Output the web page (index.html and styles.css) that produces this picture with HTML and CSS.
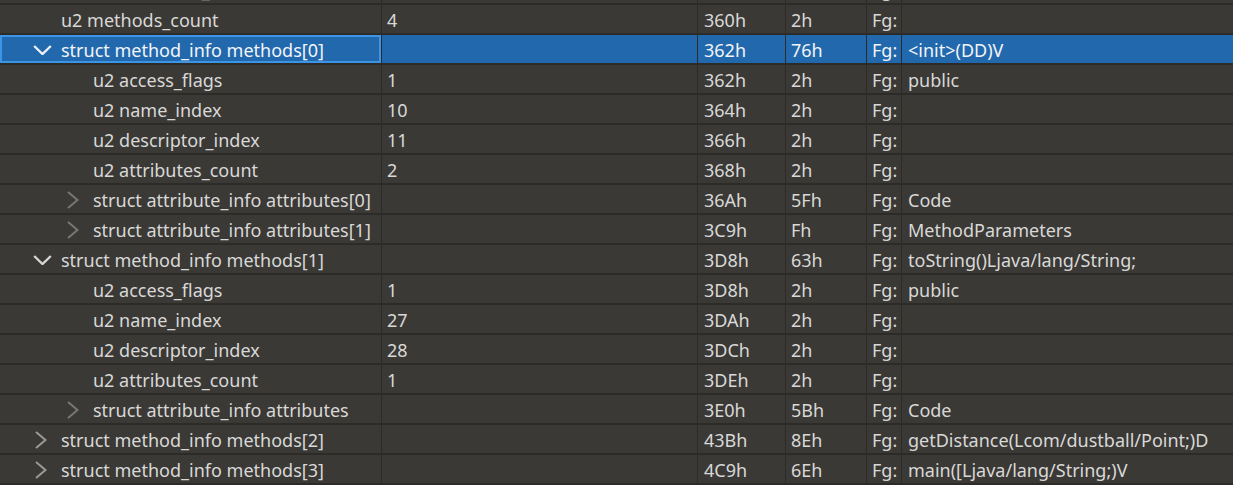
FILE: index.html
```html
<!DOCTYPE html>
<html>
<head>
<meta charset="utf-8">
<link rel="stylesheet" href="styles.css">
</head>
<body>
<div class="table">
  <div class="row">
    <div class="c1 l2"><span class="tw"></span><span class="name">u2 attributes_count</span></div>
    <div class="c2">1</div><div class="c3">35Eh</div><div class="c4">2h</div><div class="c5">Fg:</div><div class="c6"></div>
  </div>
  <div class="row">
    <div class="c1 l1"><span class="tw"></span><span class="name">u2 methods_count</span></div>
    <div class="c2">4</div><div class="c3">360h</div><div class="c4">2h</div><div class="c5">Fg:</div><div class="c6"></div>
  </div>
  <div class="row sel">
    <div class="c1 l1 focus"><span class="tw"><svg class="ico-open" width="19" height="10" viewBox="0 0 19 10"><polyline points="1.2,1 9.5,9 17.8,1"/></svg></span><span class="name">struct method_info methods[0]</span></div>
    <div class="c2"></div><div class="c3">362h</div><div class="c4">76h</div><div class="c5">Fg:</div><div class="c6">&lt;init&gt;(DD)V</div>
  </div>
  <div class="row">
    <div class="c1 l2"><span class="tw"></span><span class="name">u2 access_flags</span></div>
    <div class="c2">1</div><div class="c3">362h</div><div class="c4">2h</div><div class="c5">Fg:</div><div class="c6">public</div>
  </div>
  <div class="row">
    <div class="c1 l2"><span class="tw"></span><span class="name">u2 name_index</span></div>
    <div class="c2">10</div><div class="c3">364h</div><div class="c4">2h</div><div class="c5">Fg:</div><div class="c6"></div>
  </div>
  <div class="row">
    <div class="c1 l2"><span class="tw"></span><span class="name">u2 descriptor_index</span></div>
    <div class="c2">11</div><div class="c3">366h</div><div class="c4">2h</div><div class="c5">Fg:</div><div class="c6"></div>
  </div>
  <div class="row">
    <div class="c1 l2"><span class="tw"></span><span class="name">u2 attributes_count</span></div>
    <div class="c2">2</div><div class="c3">368h</div><div class="c4">2h</div><div class="c5">Fg:</div><div class="c6"></div>
  </div>
  <div class="row">
    <div class="c1 l2"><span class="tw"><svg class="ico-closed dim" width="12" height="18" viewBox="0 0 12 18"><polyline points="1,1 10.5,9 1,17"/></svg></span><span class="name">struct attribute_info attributes[0]</span></div>
    <div class="c2"></div><div class="c3">36Ah</div><div class="c4">5Fh</div><div class="c5">Fg:</div><div class="c6">Code</div>
  </div>
  <div class="row">
    <div class="c1 l2"><span class="tw"><svg class="ico-closed dim" width="12" height="18" viewBox="0 0 12 18"><polyline points="1,1 10.5,9 1,17"/></svg></span><span class="name">struct attribute_info attributes[1]</span></div>
    <div class="c2"></div><div class="c3">3C9h</div><div class="c4">Fh</div><div class="c5">Fg:</div><div class="c6">MethodParameters</div>
  </div>
  <div class="row">
    <div class="c1 l1"><span class="tw"><svg class="ico-open" width="19" height="10" viewBox="0 0 19 10"><polyline points="1.2,1 9.5,9 17.8,1"/></svg></span><span class="name">struct method_info methods[1]</span></div>
    <div class="c2"></div><div class="c3">3D8h</div><div class="c4">63h</div><div class="c5">Fg:</div><div class="c6">toString()Ljava/lang/String;</div>
  </div>
  <div class="row">
    <div class="c1 l2"><span class="tw"></span><span class="name">u2 access_flags</span></div>
    <div class="c2">1</div><div class="c3">3D8h</div><div class="c4">2h</div><div class="c5">Fg:</div><div class="c6">public</div>
  </div>
  <div class="row">
    <div class="c1 l2"><span class="tw"></span><span class="name">u2 name_index</span></div>
    <div class="c2">27</div><div class="c3">3DAh</div><div class="c4">2h</div><div class="c5">Fg:</div><div class="c6"></div>
  </div>
  <div class="row">
    <div class="c1 l2"><span class="tw"></span><span class="name">u2 descriptor_index</span></div>
    <div class="c2">28</div><div class="c3">3DCh</div><div class="c4">2h</div><div class="c5">Fg:</div><div class="c6"></div>
  </div>
  <div class="row">
    <div class="c1 l2"><span class="tw"></span><span class="name">u2 attributes_count</span></div>
    <div class="c2">1</div><div class="c3">3DEh</div><div class="c4">2h</div><div class="c5">Fg:</div><div class="c6"></div>
  </div>
  <div class="row">
    <div class="c1 l2"><span class="tw"><svg class="ico-closed dim" width="12" height="18" viewBox="0 0 12 18"><polyline points="1,1 10.5,9 1,17"/></svg></span><span class="name">struct attribute_info attributes</span></div>
    <div class="c2"></div><div class="c3">3E0h</div><div class="c4">5Bh</div><div class="c5">Fg:</div><div class="c6">Code</div>
  </div>
  <div class="row">
    <div class="c1 l1"><span class="tw"><svg class="ico-closed" width="12" height="18" viewBox="0 0 12 18"><polyline points="1,1 10.5,9 1,17"/></svg></span><span class="name">struct method_info methods[2]</span></div>
    <div class="c2"></div><div class="c3">43Bh</div><div class="c4">8Eh</div><div class="c5">Fg:</div><div class="c6">getDistance(Lcom/dustball/Point;)D</div>
  </div>
  <div class="row">
    <div class="c1 l1"><span class="tw"><svg class="ico-closed" width="12" height="18" viewBox="0 0 12 18"><polyline points="1,1 10.5,9 1,17"/></svg></span><span class="name">struct method_info methods[3]</span></div>
    <div class="c2"></div><div class="c3">4C9h</div><div class="c4">6Eh</div><div class="c5">Fg:</div><div class="c6">main([Ljava/lang/String;)V</div>
  </div>
</div>
</body>
</html>
```

FILE: styles.css
```css
html, body {
  margin: 0;
  padding: 0;
  background: #2c2b28;
  overflow: hidden;
}

.table {
  display: flex;
  flex-direction: column;
  gap: 2px;
  margin-top: -25px;
  background: #2c2b28;
  font-family: "Noto Sans", "Open Sans", sans-serif;
  font-size: 18px;
  color: #d8d8d6;
}

.row {
  display: grid;
  grid-template-columns: 381px 315px 87px 80px 34px 1fr;
  column-gap: 1px;
  height: 28px;
}

.row > div {
  background: #3b3936;
  display: flex;
  align-items: center;
  white-space: nowrap;
  overflow: hidden;
  padding-left: 5px;
  line-height: 28px;
}

.name, .row > div {
  padding-top: 1px;
}

.row > .c3 { padding-left: 6px; }
.row > .c6 { padding-left: 6px; }

.row > .l1 { padding-left: 29px; }
.row > .l2 { padding-left: 61px; }

.tw {
  width: 28px;
  margin-right: 4px;
  flex: none;
  display: flex;
  align-items: center;
}

.ico-open {
  margin-left: 4px;
  fill: none;
  stroke: #d6d6d6;
  stroke-width: 2.4;
}

.ico-closed {
  margin-left: 6px;
  fill: none;
  stroke: #9a9a98;
  stroke-width: 2;
}

.ico-closed.dim {
  stroke: #787775;
}

.row.sel > div {
  background: #2268ad;
  color: #f2f4f8;
}

.row.sel .ico-open {
  stroke: #eef2f8;
}

.row.sel > .focus {
  box-shadow: inset 0 0 0 2px #3b94e4;
}
```
